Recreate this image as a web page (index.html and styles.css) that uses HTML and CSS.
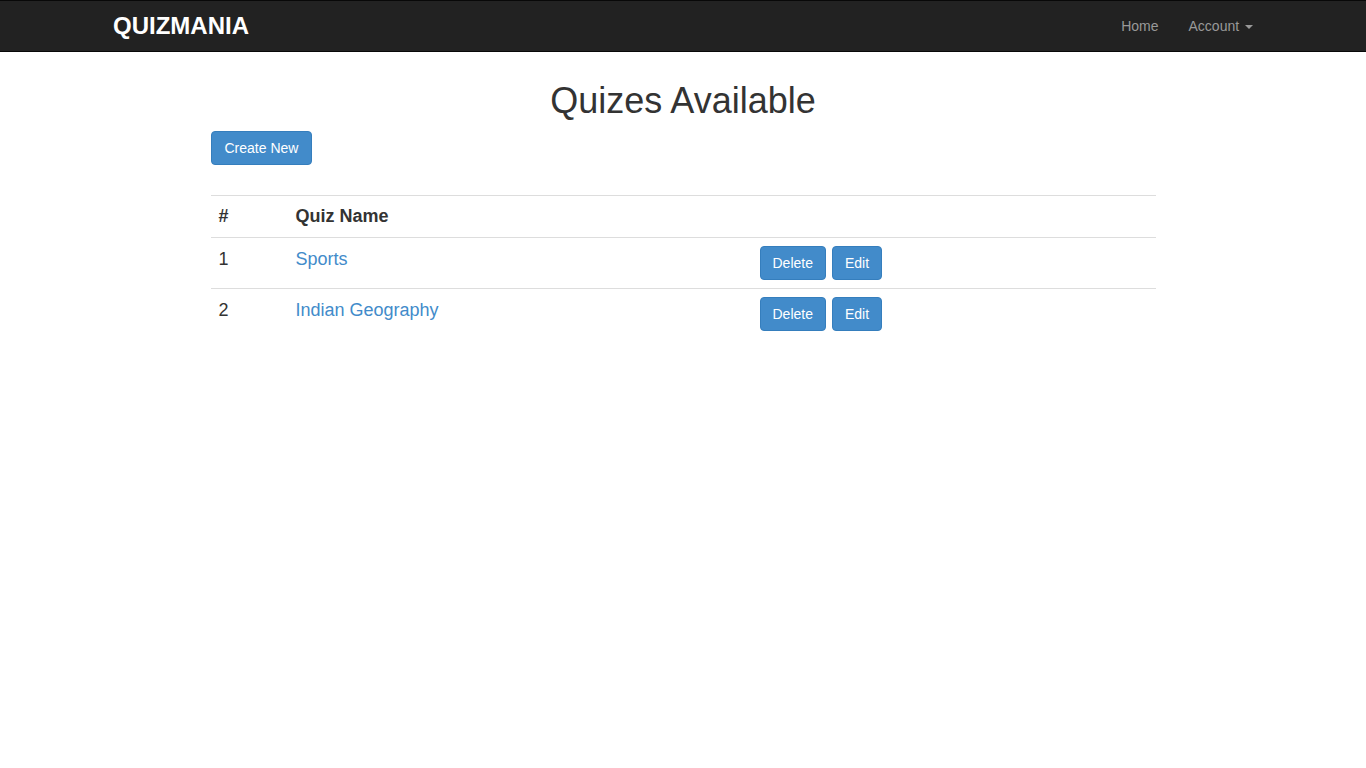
FILE: index.html
```html
<!DOCTYPE html>
<html lang="en">
<head>
    <meta charset="UTF-8">
    <meta name="viewport" content="width=device-width, initial-scale=1.0">
    <title>Quizmania</title>
    <link rel="stylesheet" href="styles.css">
</head>
<body>
    <nav class="navbar">
        <div class="container navbar-inner">
            <a class="brand" href="#">QUIZMANIA</a>
            <ul class="nav">
                <li><a href="#">Home</a></li>
                <li><a href="#">Account <span class="caret"></span></a></li>
            </ul>
        </div>
    </nav>

    <div class="container">
        <div class="content">
            <h1 class="title">Quizes Available</h1>
            <a class="btn btn-create" href="#">Create New</a>

            <table class="table">
                <thead>
                    <tr>
                        <th class="col-num">#</th>
                        <th class="col-name">Quiz Name</th>
                        <th></th>
                    </tr>
                </thead>
                <tbody>
                    <tr>
                        <td>1</td>
                        <td><a href="#">Sports</a></td>
                        <td class="actions">
                            <a class="btn" href="#">Delete</a>
                            <a class="btn" href="#">Edit</a>
                        </td>
                    </tr>
                    <tr>
                        <td>2</td>
                        <td><a href="#">Indian Geography</a></td>
                        <td class="actions">
                            <a class="btn" href="#">Delete</a>
                            <a class="btn" href="#">Edit</a>
                        </td>
                    </tr>
                </tbody>
            </table>
        </div>
    </div>
</body>
</html>
```

FILE: styles.css
```css
body {
    margin: 0;
    font-family: "Liberation Sans", Arial, Helvetica, sans-serif;
    font-size: 14px;
    line-height: 1.428571;
    color: #333;
    background-color: #fff;
}
a {
    color: #428bca;
    text-decoration: none;
}
.container {
    width: 1170px;
    margin: 0 auto;
    padding: 0 15px;
    box-sizing: border-box;
}
.navbar {
    background-color: #222;
    border-top: 1px solid #080808;
    border-bottom: 1px solid #080808;
    height: 50px;
}
.navbar-inner {
    display: flex;
    justify-content: space-between;
    align-items: flex-start;
    height: 50px;
}
.brand {
    color: #fff;
    font-size: 24px;
    font-weight: bold;
    line-height: 20px;
    padding: 15px 0;
}
.nav {
    list-style: none;
    margin: 0 -15px 0 0;
    padding: 0;
    display: flex;
}
.nav a {
    display: block;
    padding: 15px;
    line-height: 20px;
    color: #999;
}
.caret {
    display: inline-block;
    width: 0;
    height: 0;
    margin-left: 2px;
    vertical-align: middle;
    border-top: 4px solid #999;
    border-left: 4px solid transparent;
    border-right: 4px solid transparent;
}
.content {
    width: 945px;
    margin: 0 auto;
}
.title {
    text-align: center;
    font-size: 36px;
    font-weight: 500;
    line-height: 1.1;
    margin: 29px 0 10px;
}
.btn {
    display: inline-block;
    padding: 6px 12px;
    font-size: 14px;
    line-height: 20px;
    color: #fff;
    background-color: #428bca;
    border: 1px solid #357ebd;
    border-radius: 4px;
}
.btn-create {
    padding: 6px 13px;
}
.table {
    width: 100%;
    margin-top: 30px;
    border-collapse: collapse;
    font-size: 18px;
}
.table th,
.table td {
    padding: 8px;
    text-align: left;
    vertical-align: top;
    border-top: 1px solid #ddd;
}
.table td {
    padding-top: 9px;
    padding-bottom: 7px;
}
.table th {
    font-weight: bold;
    border-bottom: 1px solid #ddd;
    vertical-align: bottom;
}
.table tbody tr:first-child td {
    border-top: 0;
}
.table td.actions {
    padding-top: 8px;
    padding-bottom: 8px;
}
.col-num {
    width: 61px;
}
.col-name {
    width: 448px;
}
.actions .btn + .btn {
    margin-left: 1px;
}
```
